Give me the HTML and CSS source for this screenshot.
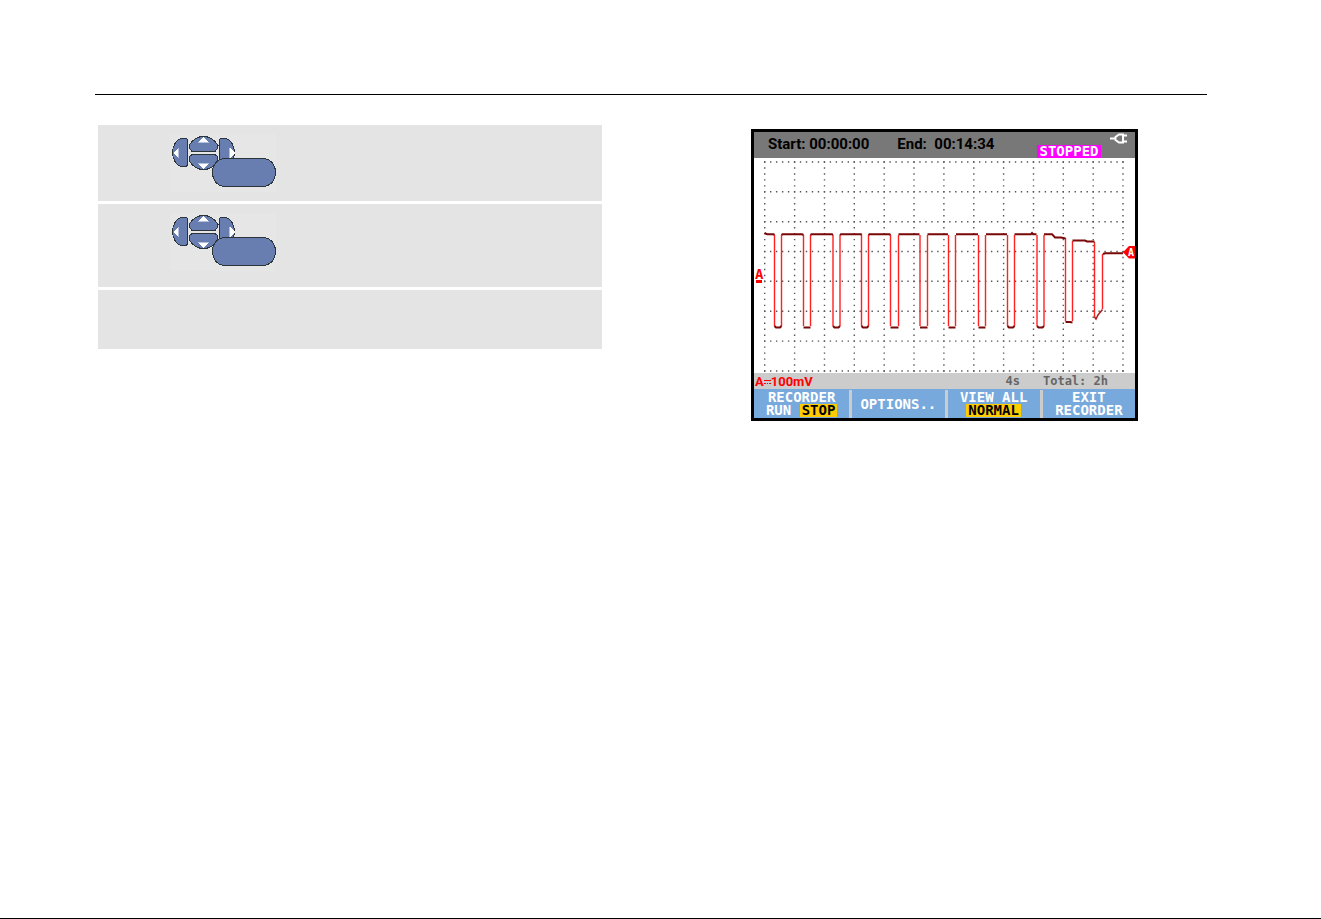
FILE: index.html
```
<!DOCTYPE html>
<html lang="en">

<head>
    <meta charset="UTF-8">
    <meta name="viewport" content="width=device-width, initial-scale=1.0">
    <title>Recorder</title>
    <link rel="stylesheet" href="styles.css">
</head>

<body>
    <header class="page-header"></header>
    <main>
        <section class="steps">
            <div class="step step-one">
                <svg class="keypad" viewBox="170 134 106 58" role="img" aria-label="Arrow keys and enter key">
                    <g id="keys">
                        <rect class="keypad-bg" x="170" y="134" width="106" height="58" />
                        <g class="key">
                            <path d="M187.500 140V164Q187.500 166.500 185 166.500H181C176 165 172.500 159 172.500 152.500C172.500 146 176 140 181 138.500H185Q187.500 138.500 187.500 140Z" />
                            <path d="M189.500 144.500C193 139.500 197 136.500 203.500 136.500C210 136.500 214 139.500 217.500 144.500V148.500L215 151.500H192L189.500 148.500Z" />
                            <path d="M189.500 161.500C193 166.500 197 169.500 203.500 169.500C210 169.500 214 166.500 217.500 161.500V156.500L215 154.500H192L189.500 156.500Z" />
                            <path d="M219.500 140V164Q219.500 166.500 222 166.500H226C231 165 234.500 159 234.500 152.500C234.500 146 231 140 226 138.500H222Q219.500 138.500 219.500 140Z" />
                            <path d="M217.500 145.500H219.500M217 160H220" />
                            <path d="M224 158.500H264C271 159.500 275.500 165 275.500 172.500C275.500 180 271 185.500 264 186.500H224C217 185.500 212.500 180 212.500 172.500C212.500 165 217 159.500 224 158.500Z" />
                        </g>
                        <path class="arrow-edge" d="M178.500 148V158M229.500 148V158M198 142.500H209M198 163.500H209" />
                        <path class="arrow" d="M173 153L178 148V158ZM235 153L230 148V158ZM203.500 137L208.500 142H198.500ZM203.500 169.500L208.500 164H198.500Z" />
                    </g>
                </svg>
            </div>
            <div class="step step-two">
                <svg class="keypad" viewBox="170 134 106 58" role="img" aria-label="Arrow keys and enter key">
                    <use href="#keys" />
                </svg>
            </div>
            <div class="step step-three"></div>
        </section>

        <section class="scope">
            <div class="screen">
                <div class="screen-top">
                    <span class="time">Start: 00:00:00</span>
                    <span class="time">End: &nbsp;00:14:34</span>
                    <span class="state">STOPPED</span>
                    <svg class="plug" viewBox="0 0 18 12" aria-hidden="true">
                        <path d="M0 5.500H5M13 2.500H17M13 8.500H17" />
                        <path d="M13 1.500H9L5.500 4V7L9 9.500H13Z" />
                    </svg>
                </div>

                <svg class="plot" viewBox="754 158 381 215" role="img" aria-label="Recorded trace of input A">
                    <!-- dotted graticule, 12 x 7 divisions -->
                    <path class="dots" d="M764 162H1124M764 191.800H1124M764 221.700H1124M764 251.500H1124M764 281.300H1124M764 311.200H1124M764 341.100H1124M764 371H1124" />
                    <path class="dots" d="M764.700 161.300V372M794.600 161.300V372M824.500 161.300V372M854.300 161.300V372M884.200 161.300V372M914 161.300V372M943.900 161.300V372M973.800 161.300V372M1003.600 161.300V372M1033.500 161.300V372M1063.300 161.300V372M1093.200 161.300V372M1123 161.300V372" />
                    <!-- trace -->
                    <path class="trace" d="M774.500 235V326M781.500 235V326M803.500 235V326M810.500 235V326M833 235V326M840 235V326M861.500 235V326M868.500 235V326M890.500 235V326M898.500 235V326M920 235V326M927.500 235V326M948.500 235V326M955.500 235V326M978.500 235V326M985.500 235V326M1007.500 235V326M1014.500 235V326M1037 235V326M1044 235V326M1065.500 238V321M1072.500 241V321M1094.500 242V317M1102.500 254V309" />
                    <path class="level" d="M764.500 233L767 234.200H773.500L774.500 235M781.500 235L782.500 234.200H802L803.500 235M810.500 235L811.500 234.200H832L833 235M840 235L841 234.200H861L861.500 235M868.500 235L869.500 234.200H889.500L890.500 235M898.500 234.200H919.500M927.500 234.200H948M956 234.200H978M986 234.200H1007M1014.500 234.200H1031L1032 233L1033 234.200H1036.500M1044 234.200H1052L1055 237.500H1061L1065.500 238.500M1072.500 240.500H1085L1087 241.500H1094.500M1103 254L1105 253.200H1123" />
                    <path class="level" d="M774.500 326L776 327.500H780L781.500 326M803.500 327.500H810.500M833 326L834.500 327.500H838.500L840 326M861.500 326L863 327.500H867L868.500 326M890.500 327.500H898.500M920 327.500H927.500M948.500 327.500H955.500M978.500 327.500H985.500M1007.500 326L1009 327.500H1013L1014.500 326M1037 326L1038.500 327.500H1042.500L1044 326M1065.500 322H1070L1072.500 322.500" />
                    <path class="slope" d="M1094.500 317L1096 319L1098 315L1102.500 309.500" />
                    <text class="channel" x="755" y="279">A</text>
                    <rect class="red" x="756" y="280" width="6" height="3" />
                    <path class="red" d="M1123 252.300L1129 246H1135V258.500H1129Z" />
                    <text class="channel-tag" x="1128" y="256">A</text>
                </svg>

                <div class="readings">
                    <span class="range">A<svg class="dc" viewBox="0 0 7 7" aria-hidden="true"><path d="M0 1.500H7M0 4.500H2M3 4.500H4M5 4.500H7" /></svg>100mV</span>
                    <span class="timebase">4s</span>
                    <span class="total">Total: 2h</span>
                </div>

                <div class="softkeys">
                    <button type="button"><span>RECORDER</span><span>RUN <mark>STOP</mark></span></button>
                    <button type="button"><span>OPTIONS..</span></button>
                    <button type="button"><span>VIEW ALL</span><span><mark>NORMAL</mark></span></button>
                    <button type="button"><span>EXIT</span><span>RECORDER</span></button>
                </div>
            </div>
        </section>
    </main>
</body>

</html>
```

FILE: styles.css
```
body {
    margin: 0;
    padding: 0 114px 0 95px;
    min-height: 100vh;
    box-sizing: border-box;
    background: linear-gradient(#000, #000) bottom / 100% 1px no-repeat #fff;
    font-family: Roboto, "Liberation Sans", sans-serif;
}

.page-header {
    height: 94px;
    border-bottom: 1px solid #000;
}

main {
    display: grid;
    grid-template-columns: 1fr 1fr;
    gap: 62px;
    padding-top: 30px;
}

.steps {
    display: flex;
    flex-direction: column;
    gap: 3px;
    padding: 0 18px 0 3px;
}

.step {
    box-sizing: border-box;
    padding: 9px 72px;
    background-color: #e4e4e4;
}

.step-one {
    min-height: 76px;
}

.step-two {
    min-height: 83px;
}

.step-three {
    min-height: 59px;
}

.keypad {
    display: block;
    width: 106px;
    height: 58px;
    shape-rendering: crispEdges;
}

.keypad-bg {
    fill: #e6e6e6;
}

.key {
    fill: #687eb0;
    stroke: #2b3439;
    stroke-width: 1;
}

.arrow {
    fill: #fff;
}

.arrow-edge {
    stroke: #b4bfdc;
}

/* instrument screen */
.scope {
    padding-top: 4px;
}

.screen {
    max-width: 381px;
    margin: 0 auto;
    border: 3px solid #000;
    background-color: #fff;
}

.screen-top {
    display: flex;
    position: relative;
    height: 26px;
    padding-left: 14px;
    gap: 28px;
    background-color: #787878;
}

.time {
    font-size: 15px;
    line-height: 24px;
    font-weight: bold;
    white-space: nowrap;
}

.state {
    position: absolute;
    right: 34px;
    bottom: 0;
    width: 64px;
    height: 13px;
    background-color: #f0f;
    color: #fff;
    font: bold 14px/13px "DejaVu Sans Mono", monospace;
    text-align: center;
}

.plug {
    position: absolute;
    top: 1px;
    right: 7px;
    width: 18px;
    height: 12px;
    fill: none;
    stroke: #fff;
    stroke-width: 2;
}

.plot {
    display: block;
    width: 100%;
}

.dots {
    fill: none;
    stroke: #555;
    stroke-width: 1.4;
    stroke-dasharray: 1.4 4.572;
}

.trace {
    fill: none;
    stroke: #f22;
    stroke-width: 1.4;
}

.level {
    fill: none;
    stroke: #7a0808;
    stroke-width: 2;
}

.slope {
    fill: none;
    stroke: #a82020;
    stroke-width: 1.5;
}

.red {
    fill: #f00;
}

.channel {
    fill: #f00;
    font: bold 14px "DejaVu Sans Mono", monospace;
}

.channel-tag {
    fill: #fff;
    font: bold 10px "DejaVu Sans Mono", monospace;
}

.readings {
    display: flex;
    height: 16px;
    padding: 0 27px 0 1px;
    background-color: #ccc;
    color: #666;
    font: bold 12px/17px "DejaVu Sans Mono", monospace;
}

.range {
    color: #f00;
    font: bold 13px/17px Roboto, sans-serif;
}

.dc {
    width: 7px;
    height: 7px;
    stroke: #f00;
    stroke-width: 1;
}

.timebase {
    margin-left: auto;
}

.total {
    margin-left: 23px;
}

.softkeys {
    display: grid;
    grid-template-columns: repeat(4, 1fr);
    height: 29px;
    background-color: #78a9dd;
}

.softkeys button {
    margin: 1px 0 0;
    padding: 0;
    border: 0;
    border-left: 3px solid #ccc;
    background: none;
    color: #fff;
    font: bold 14px/13px "DejaVu Sans Mono", monospace;
    white-space: nowrap;
}

.softkeys button:first-child {
    border-left: 0;
}

.softkeys span {
    display: block;
    height: 13px;
}

.softkeys mark {
    display: inline-block;
    height: 13px;
    padding: 0 2px;
    background-color: #fc0;
    color: #000;
}
```
